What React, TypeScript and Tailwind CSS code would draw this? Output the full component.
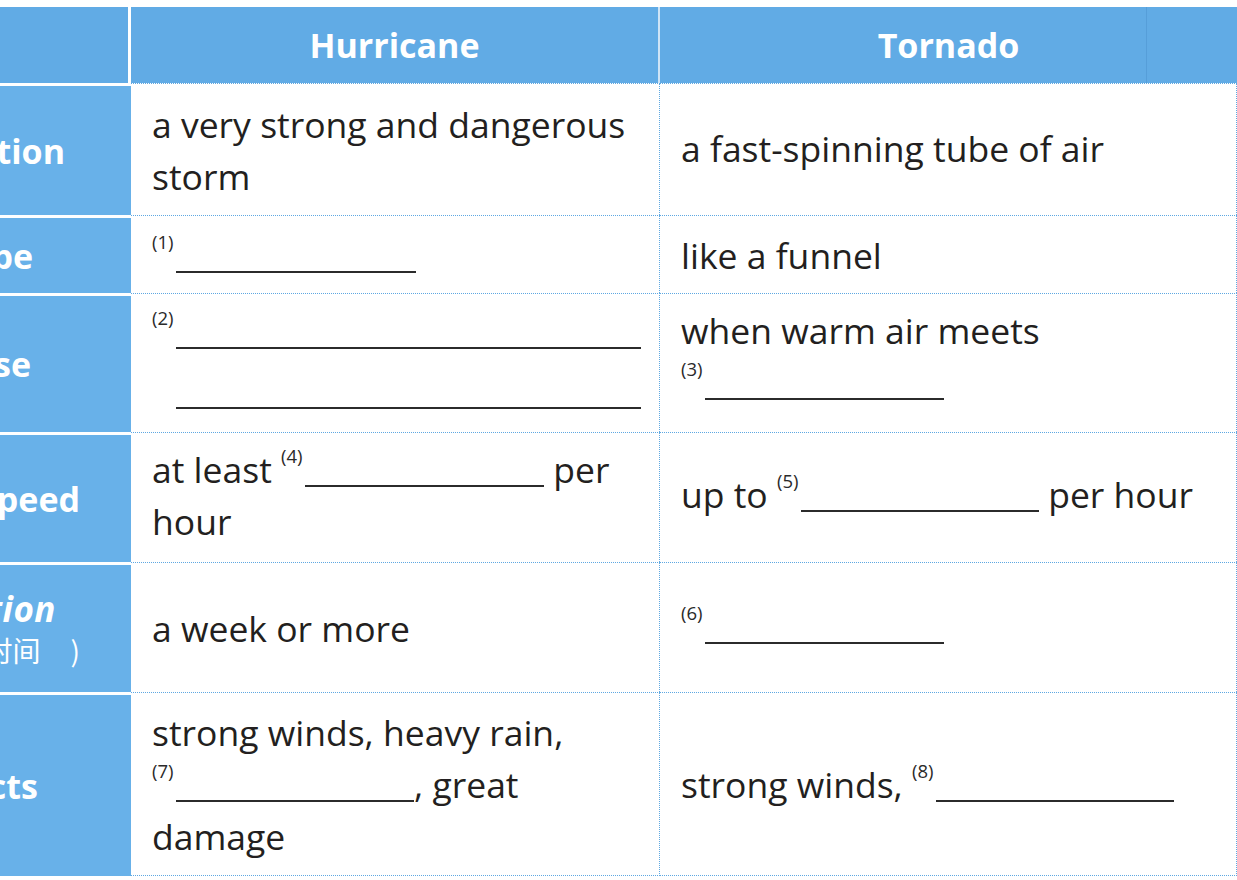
import React from "react";

const Sup = ({ children }: { children: React.ReactNode }) => (
  <span className="inline-block w-[24px] text-[18.5px] leading-none align-[20px] text-[#2a2a2a]">
    {children}
  </span>
);

const Blank = ({ className }: { className: string }) => (
  <span className={"inline-block h-[2px] bg-[#2b2b2b] align-[-4px] " + className} />
);

const label =
  "bg-[#68b1e9] border-t-[3px] border-white flex items-center justify-end overflow-hidden whitespace-nowrap text-white font-bold text-[34px] leading-none";
const body =
  "border-t border-r border-dotted border-[#5ea8e2] flex items-center pl-[21px] text-[35.5px] leading-[52px] text-[#231f20] whitespace-nowrap";

export default function App() {
  return (
    <div className="w-[1237px] h-[880px] bg-white pt-[7px] overflow-hidden font-['Open_Sans',sans-serif]">
      <div className="grid grid-cols-[131px_529px_577px] grid-rows-[76px_132px_78px_139px_130px_130px_184px]">
        {/* header */}
        <div className="bg-[#61abe5] border-r-[3px] border-white" />
        <div className="bg-[#61abe5] border-r-2 border-[#cfe4f6] flex items-center justify-center text-white font-bold text-[34px] leading-none">
          Hurricane
        </div>
        <div className="bg-[#61abe5] relative flex items-center justify-center text-white font-bold text-[34px] leading-none">
          Tornado
          <div className="absolute left-[486px] top-0 bottom-0 w-px bg-[#4e96d0] opacity-60" />
        </div>

        {/* Definition */}
        <div className={label + " pr-[66px]"}>Definition</div>
        <div className={body}>
          <div>
            a very strong and dangerous
            <br />
            storm
          </div>
        </div>
        <div className={body + " pb-[4px]"}>
          <div>a fast-spinning tube of air</div>
        </div>

        {/* Shape */}
        <div className={label + " pr-[98px]"}>Shape</div>
        <div className={body}>
          <div>
            <Sup>(1)</Sup>
            <Blank className="w-[240px]" />
          </div>
        </div>
        <div className={body}>
          <div>like a funnel</div>
        </div>

        {/* Cause */}
        <div className={label + " pr-[100px]"}>Cause</div>
        <div className={body + " pb-[5px]"}>
          <div className="leading-[60px]">
            <div>
              <Sup>(2)</Sup>
              <Blank className="w-[465px]" />
            </div>
            <div className="pl-[24px]">
              <Blank className="w-[465px]" />
            </div>
          </div>
        </div>
        <div className={body + " pb-[14px]"}>
          <div>
            when warm air meets
            <br />
            <Sup>(3)</Sup>
            <Blank className="w-[239px]" />
          </div>
        </div>

        {/* Speed */}
        <div className={label + " pr-[51px]"}>Speed</div>
        <div className={body + " pb-[5px]"}>
          <div>
            at least <Sup>(4)</Sup>
            <Blank className="w-[239px]" /> per
            <br />
            hour
          </div>
        </div>
        <div className={body + " pb-[8px]"}>
          <div>
            up to <Sup>(5)</Sup>
            <Blank className="w-[238px]" /> per hour
          </div>
        </div>

        {/* Duration */}
        <div className="bg-[#68b1e9] border-t-[3px] border-white flex flex-col items-end justify-center overflow-hidden whitespace-nowrap text-white pb-[2px]">
          <div className="font-bold italic text-[35px] leading-[44px] pr-[75px] tracking-[0.5px]">Duration</div>
          <div className="font-['Noto_Sans_CJK_SC',sans-serif] text-[28px] leading-[38px] pr-[51px]">
            （持续时间<span className="ml-[30px]">)</span>
          </div>
        </div>
        <div className={body}>
          <div>a week or more</div>
        </div>
        <div className={body + " pb-[4px]"}>
          <div>
            <Sup>(6)</Sup>
            <Blank className="w-[239px]" />
          </div>
        </div>

        {/* Effects */}
        <div className={label + " pr-[93px]"}>Effects</div>
        <div className={body + " border-b"}>
          <div>
            strong winds, heavy rain,
            <br />
            <Sup>(7)</Sup>
            <Blank className="w-[238px]" />, great
            <br />
            damage
          </div>
        </div>
        <div className={body + " border-b"}>
          <div>
            strong winds, <Sup>(8)</Sup>
            <Blank className="w-[238px]" />
          </div>
        </div>
      </div>
    </div>
  );
}
